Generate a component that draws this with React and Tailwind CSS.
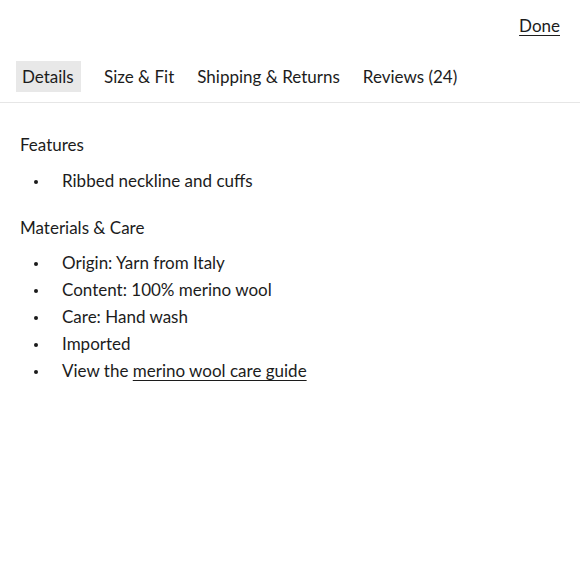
const tabs = ["Details", "Size & Fit", "Shipping & Returns", "Reviews (24)"];

const Bullet = ({ children }) => (
    <li className="flex items-center h-[27px]">
        <span className="w-[42px] pl-[14px] pt-[2px] flex items-center">
            <span className="block w-[4px] h-[4px] rounded-full bg-[#1a1a1a]" />
        </span>
        <span>{children}</span>
    </li>
);

export default function App() {
    return (
        <div className="w-[580px] h-[580px] bg-white text-[#1c1c1c]" style={{ fontFamily: "Lato, 'Noto Sans', sans-serif" }}>
            {/* Header */}
            <div className="flex justify-end px-5 h-[61px] pt-[13px]">
                <span className="text-[17px] leading-[26px] h-[26px] underline underline-offset-[3px]">Done</span>
            </div>

            {/* Tabs */}
            <div className="flex px-4 h-[42px] border-b border-[#e6e6e6]">
                {tabs.map((tab, i) => (
                    <div
                        key={tab}
                        className={`h-[31px] flex items-center text-[17px] ${i === 0 ? "bg-[#e8e8e8] pl-[6px] w-[65px]" : "px-[6px]"} ${i === 1 ? "ml-[17px]" : ""} ${i > 1 ? "ml-[11px]" : ""}`}
                    >
                        {tab}
                    </div>
                ))}
            </div>

            {/* Content */}
            <div className="px-5 pt-[30px] text-[17px]">
                <h3 className="h-[24px] leading-[24px]">Features</h3>
                <ul className="mt-[10px]">
                    <Bullet>Ribbed neckline and cuffs</Bullet>
                </ul>

                <h3 className="h-[24px] leading-[24px] mt-[22px]">Materials &amp; Care</h3>
                <ul className="mt-[9px]">
                    <Bullet>Origin: Yarn from Italy</Bullet>
                    <Bullet>Content: 100% merino wool</Bullet>
                    <Bullet>Care: Hand wash</Bullet>
                    <Bullet>Imported</Bullet>
                    <Bullet>
                        View the <a className="underline underline-offset-[3px]">merino wool care guide</a>
                    </Bullet>
                </ul>
            </div>
        </div>
    );
}
